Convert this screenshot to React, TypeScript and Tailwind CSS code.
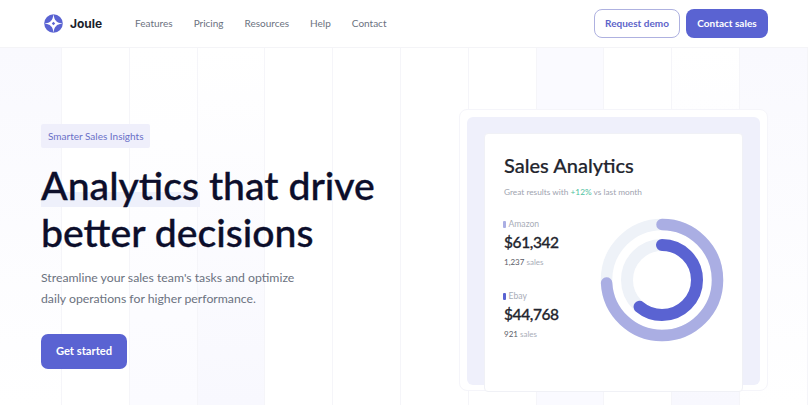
import React from 'react';

const navLinks = ['Features', 'Pricing', 'Resources', 'Help', 'Contact'];

// column widths and tints of the hero backdrop
const gridCells = [
    'w-[62px] bg-linear-to-b from-[#f9f9fe] to-white',
    'w-[68px] bg-white',
    'w-[68px] bg-linear-to-t from-[#fbfbff] to-white',
    'w-[68px] bg-linear-to-t from-[#f8f8fe] to-white',
    'w-[68px] bg-white',
    'w-[68px] bg-white',
    'w-[68px] bg-white',
    'w-[68px] bg-white',
    'w-[68px] bg-[#fafaff]',
    'w-[68px] bg-white',
    'w-[68px] bg-linear-to-t from-[#f8f8fe] to-white',
    'w-[68px] bg-linear-to-b from-[#f9f9fe] to-white',
];

const Logo: React.FC = () => (
    <svg width="19" height="19" viewBox="0 0 20 20" className="shrink-0">
        <circle cx="10" cy="10" r="9.8" fill="#5a63d2" />
        <path d="M10 0C10.5 5 12.2 7.6 13 7 12.4 7.8 15 9.5 20 10 15 10.5 12.4 12.2 13 13 12.2 12.4 10.5 15 10 20 9.5 15 7.8 12.4 7 13 7.6 12.2 5 10.5 0 10 5 9.5 7.6 7.8 7 7 7.8 7.6 9.5 5 10 0Z" fill="#ffffff" />
        <path d="M10 8.2L11.8 10 10 11.8 8.2 10Z" fill="#5a63d2" />
    </svg>
);

const Ring: React.FC<{ r: number; width: number; pct: number; color: string }> = ({ r, width, pct, color }) => {
    const circ = 2 * Math.PI * r;
    return (
        <>
            <circle cx="62" cy="62" r={r} fill="none" stroke="#eef2f8" strokeWidth={width} />
            <circle
                cx="62"
                cy="62"
                r={r}
                fill="none"
                stroke={color}
                strokeWidth={width}
                strokeLinecap="round"
                strokeDasharray={`${circ * pct} ${circ}`}
                transform="rotate(-90 62 62)"
            />
        </>
    );
};

const Stat: React.FC<{ label: string; value: string; count: string; bar: string }> = ({ label, value, count, bar }) => (
    <div className="flex flex-col">
        <div className="flex items-center gap-[3px] h-[12px] -ml-[1px] text-[8.6px] text-[#a9adb8]">
            <span className={`w-[2.5px] h-[7px] rounded-[1px] ${bar}`} />
            {label}
        </div>
        <div className="h-[24px] leading-[24px] text-[15.5px] tracking-[-0.4px] font-medium text-[#23252e] [-webkit-text-stroke:0.3px_#23252e]">{value}</div>
        <div className="mt-[2px] h-[12px] leading-[12px] text-[8px] text-[#a9adb8]">
            <span className="text-[#5b5e68]">{count}</span> sales
        </div>
    </div>
);

const App: React.FC = () => {
    return (
        <div className="relative w-[808px] h-[405px] overflow-hidden bg-white font-['Lato','Noto_Sans',sans-serif]">
            {/* background column grid */}
            <div className="absolute left-0 right-0 top-[47px] bottom-0 flex">
                {gridCells.map((c, i) => (
                    <div key={i} className={`${c} h-full border-r border-[#f5f5f9]`} />
                ))}
            </div>

            <header className="relative flex items-center justify-between h-[48px] pl-[44px] pr-[40px] bg-white border-b border-[#f4f4f7]">
                <div className="flex items-center">
                    <div className="flex items-center gap-[7px] w-[91px]">
                        <Logo />
                        <span className="text-[12px] font-bold text-[#1d1f2c] font-['Inter',sans-serif]">Joule</span>
                    </div>
                    <nav className="flex items-center gap-[21px] text-[10px] text-[#6b7280]">
                        {navLinks.map(link => (
                            <a key={link}>{link}</a>
                        ))}
                    </nav>
                </div>
                <div className="flex items-center gap-[6px] text-[10px] font-bold">
                    <button className="w-[86px] h-[29px] rounded-[8px] border border-[#aeb1e0] bg-white text-[#5d64c9]">Request demo</button>
                    <button className="w-[82px] h-[29px] rounded-[8px] bg-[#5a63d2] text-white">Contact sales</button>
                </div>
            </header>

            <main className="relative flex items-start justify-between pl-[41px] pr-[40px]">
                <section className="mt-[76px] w-[400px] flex flex-col items-start">
                    <div className="w-[109px] h-[24px] px-[7px] flex items-center rounded-[2px] bg-[#efeffb] text-[10px] text-[#6a70c8] whitespace-nowrap">Smarter Sales Insights</div>
                    <h1 className="relative mt-[13px] text-[39.2px] leading-[47px] font-medium text-[#0c0e2b] [-webkit-text-stroke:0.35px_#0c0e2b]">
                        <span className="absolute left-0 top-[31px] w-[159px] h-[15px] bg-[#eef0fb]" />
                        <span className="relative">Analytics that drive</span>
                        <br />
                        better decisions
                    </h1>
                    <p className="mt-[12px] text-[12.25px] leading-[21px] text-[#6b7280]">
                        Streamline your sales team's tasks and optimize
                        <br />
                        daily operations for higher performance.
                    </p>
                    <button className="mt-[25px] w-[86px] h-[35px] rounded-[7px] bg-[#5a63d2] text-white text-[11.2px] font-bold">Get started</button>
                </section>

                <section className="mt-[61px] w-[309px] h-[282px] p-[7px] rounded-[8px] bg-white border border-[#f5f5fa]">
                    <div className="w-full h-[268px] rounded-[6px] bg-[#eff0fb] pl-[17px] pr-[17px] pt-[16px]">
                        <div className="h-[259px] rounded-[4px] bg-white border border-[#f0f1f6] pl-[19px] pt-[16px]">
                            <h2 className="text-[20px] leading-[30px] font-medium text-[#23252e] [-webkit-text-stroke:0.2px_#23252e]">Sales Analytics</h2>
                            <p className="mt-[5px] text-[8.3px] leading-[14px] text-[#a0a4b0]">
                                Great results with <span className="text-[#4fbfa0]">+12%</span> vs last month
                            </p>
                            <div className="relative mt-[19px]">
                                <div className="flex flex-col gap-[22px]">
                                    <Stat label="Amazon" value="$61,342" count="1,237" bar="bg-[#aaaee3]" />
                                    <Stat label="Ebay" value="$44,768" count="921" bar="bg-[#5a63d2]" />
                                </div>
                                <svg width="124" height="124" viewBox="0 0 124 124" className="absolute left-[96px] top-0">
                                    <Ring r={55.5} width={11.5} pct={0.74} color="#aaaee3" />
                                    <Ring r={35} width={12} pct={0.61} color="#5a63d2" />
                                </svg>
                            </div>
                        </div>
                    </div>
                </section>
            </main>
        </div>
    );
};

export default App;
